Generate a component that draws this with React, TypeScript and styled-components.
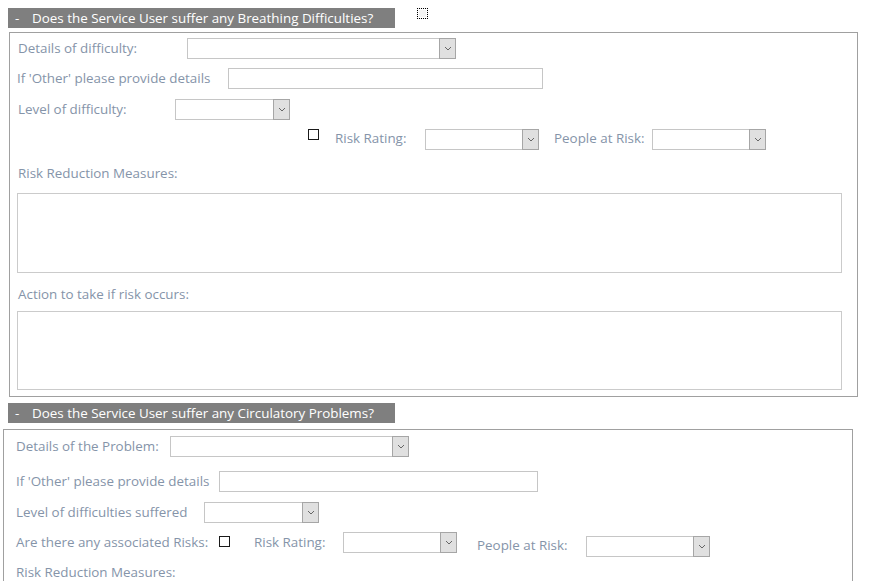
import React from "react";
import styled, { createGlobalStyle } from "styled-components";

const GlobalStyle = createGlobalStyle`
	body {
		margin: 0;
		background: #ffffff;
		font-family: "Open Sans", "Noto Sans", sans-serif;
	}
	* { box-sizing: border-box; }
`;

const Page = styled.div`
	width: 880px;
	height: 581px;
	overflow: hidden;
	padding-top: 8px;
`;

const HeadRow = styled.div`
	display: flex;
	align-items: flex-start;
	margin-top: ${(p: { $top: number }) => p.$top}px;
`;

const Header = styled.div`
	margin-left: 8px;
	width: 387px;
	height: 20px;
	background: #7f7f7f;
	color: #ffffff;
	font-size: 13.4px;
	line-height: 20px;
	display: flex;
	padding-left: 7px;
	white-space: nowrap;
`;

const Dash = styled.span`
	width: 17px;
`;

const FocusBox = styled.div`
	margin-left: 22px;
	width: 11px;
	height: 11px;
	border: 1px dotted #000;
	background: #f4f4f4;
	box-shadow: inset 0 0 0 1px #fff;
`;

const Panel = styled.div<{ $left: number; $width: number; $height: number; $top: number; $pad: number }>`
	margin-left: ${(p) => p.$left}px;
	margin-top: ${(p) => p.$top}px;
	width: ${(p) => p.$width}px;
	height: ${(p) => p.$height}px;
	border: 1px solid #a0a0a0;
	padding-left: ${(p) => p.$pad}px;
	display: flex;
	flex-direction: column;
`;

const Row = styled.div<{ $top: number; $indent?: number }>`
	display: flex;
	align-items: flex-start;
	margin-top: ${(p) => p.$top}px;
	padding-left: ${(p) => p.$indent || 0}px;
`;

const Label = styled.div<{ $w?: number; $ml?: number; $dy?: number; $in?: number }>`
	width: ${(p) => (p.$w ? p.$w + "px" : "auto")};
	margin-left: ${(p) => p.$ml || 0}px;
	margin-top: ${(p) => p.$dy || 0}px;
	padding-left: ${(p) => p.$in || 0}px;
	height: 21px;
	line-height: 20px;
	font-size: 13.4px;
	color: #8594a9;
	white-space: nowrap;
	flex-shrink: 0;
`;

const SelectBox = styled.div<{ $w: number; $dy?: number }>`
	width: ${(p) => p.$w}px;
	height: 21px;
	margin-top: ${(p) => p.$dy || 0}px;
	border: 1px solid #c6c6c6;
	background: #fff;
	display: flex;
	justify-content: flex-end;
	flex-shrink: 0;
`;

const DropButton = styled.div`
	width: 17px;
	height: 21px;
	margin: -1px -1px -1px 0;
	border: 1px solid #a6a6a6;
	background: #e0e0e0;
	display: flex;
	align-items: center;
	justify-content: center;
`;

const TextBox = styled.div<{ $w: number }>`
	width: ${(p) => p.$w}px;
	height: 21px;
	border: 1px solid #c6c6c6;
	background: #fff;
	flex-shrink: 0;
`;

const Check = styled.div<{ $ml?: number; $mr: number; $dy?: number }>`
	width: 11px;
	height: 11px;
	margin-left: ${(p) => p.$ml || 0}px;
	margin-right: ${(p) => p.$mr}px;
	margin-top: ${(p) => p.$dy || 0}px;
	border: 1px solid #1a1a1a;
	background: #fff;
	flex-shrink: 0;
`;

const Caption = styled.div<{ $top: number; $in?: number }>`
	margin-top: ${(p) => p.$top}px;
	padding-left: ${(p) => p.$in || 0}px;
	height: 18px;
	line-height: 18px;
	font-size: 13.4px;
	color: #8594a9;
`;

const Memo = styled.div<{ $top: number; $h: number }>`
	margin-top: ${(p) => p.$top}px;
	width: 825px;
	height: ${(p) => p.$h}px;
	border: 1px solid #cbcbcb;
	background: #fff;
`;

function Select({ w, dy }: { w: number; dy?: number }) {
	return (
		<SelectBox $w={w} $dy={dy}>
			<DropButton>
				<svg width="8" height="5" viewBox="0 0 8 5">
					<path d="M1 1 L4 4 L7 1" fill="none" stroke="#666" strokeWidth="1" />
				</svg>
			</DropButton>
		</SelectBox>
	);
}

export default function App() {
	return (
		<Page>
			<GlobalStyle />
			<HeadRow $top={0}>
				<Header>
					<Dash>-</Dash>Does the Service User suffer any Breathing Difficulties?
				</Header>
				<FocusBox />
			</HeadRow>

			<Panel $left={9} $top={4} $width={849} $height={365} $pad={7}>
				<Row $top={5}>
					<Label $w={170} $in={1}>Details of difficulty:</Label>
					<Select w={269} />
				</Row>
				<Row $top={9}>
					<Label $w={211}>If 'Other' please provide details</Label>
					<TextBox $w={315} />
				</Row>
				<Row $top={10}>
					<Label $w={158} $in={1}>Level of difficulty:</Label>
					<Select w={115} />
				</Row>
				<Row $top={9} $indent={291}>
					<Check $mr={16} />
					<Label $w={90} $dy={-1}>Risk Rating:</Label>
					<Select w={114} />
					<Label $w={98} $ml={15} $dy={-1}>People at Risk:</Label>
					<Select w={114} />
				</Row>
				<Caption $top={14} $in={1}>Risk Reduction Measures:</Caption>
				<Memo $top={11} $h={80} />
				<Caption $top={12} $in={1}>Action to take if risk occurs:</Caption>
				<Memo $top={8} $h={79} />
			</Panel>

			<HeadRow $top={6}>
				<Header>
					<Dash>-</Dash>Does the Service User suffer any Circulatory Problems?
				</Header>
			</HeadRow>

			<Panel $left={3} $top={6} $width={850} $height={200} $pad={12}>
				<Row $top={6}>
					<Label $w={154}>Details of the Problem:</Label>
					<Select w={239} />
				</Row>
				<Row $top={14}>
					<Label $w={203}>If 'Other' please provide details</Label>
					<TextBox $w={319} />
				</Row>
				<Row $top={10}>
					<Label $w={188}>Level of difficulties suffered</Label>
					<Select w={115} />
				</Row>
				<Row $top={9}>
					<Label $w={203}>Are there any associated Risks:</Label>
					<Check $mr={24} $dy={4} />
					<Label $w={89}>Risk Rating:</Label>
					<Select w={114} />
					<Label $w={109} $ml={20} $dy={3}>People at Risk:</Label>
					<Select w={124} dy={4} />
				</Row>
				<Caption $top={6}>Risk Reduction Measures:</Caption>
			</Panel>
		</Page>
	);
}
